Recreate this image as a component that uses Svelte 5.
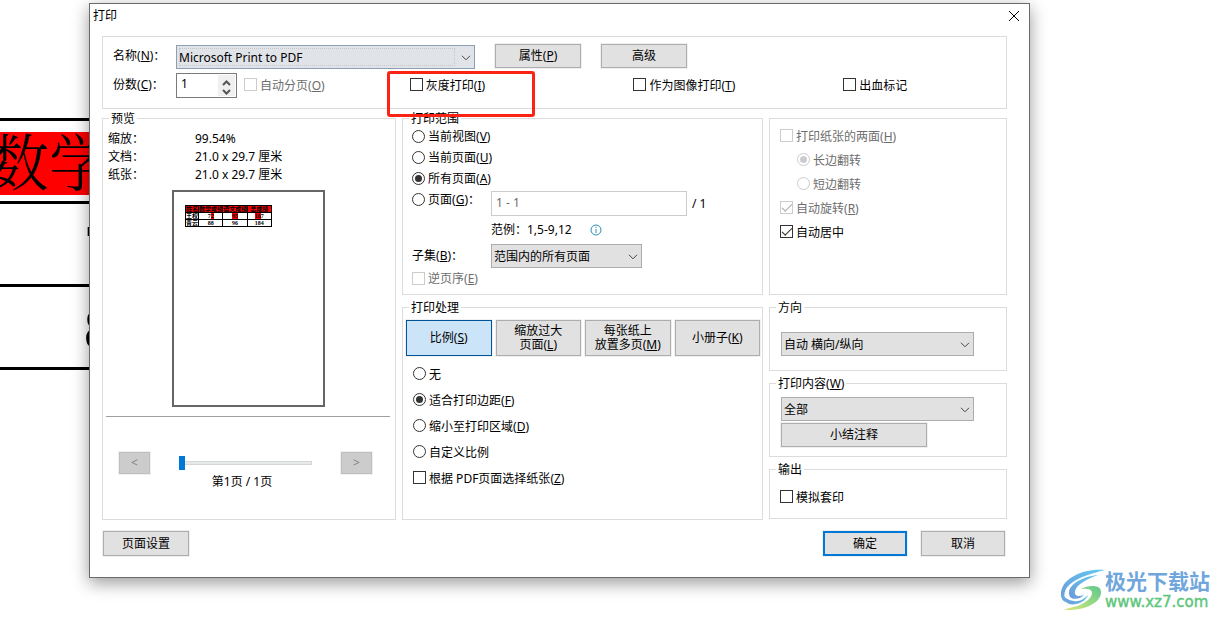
<script>
	let printer = $state('Microsoft Print to PDF');
	let copies = $state(1);
	let range = $state('all');
	let scaling = $state('fit');
	let mode = $state('S');
	let page = $state(1);

	const modes = [
		{ lines: ['比例'], key: 'S' },
		{ lines: ['缩放过大', '页面'], key: 'L' },
		{ lines: ['每张纸上', '放置多页'], key: 'M' },
		{ lines: ['小册子'], key: 'K' }
	];

	const ranges = [
		{ value: 'view', text: '当前视图', key: 'V' },
		{ value: 'current', text: '当前页面', key: 'U' },
		{ value: 'all', text: '所有页面', key: 'A' }
	];

	const scalings = [
		{ value: 'none', text: '无' },
		{ value: 'fit', text: '适合打印边距', key: 'F' },
		{ value: 'shrink', text: '缩小至打印区域', key: 'D' },
		{ value: 'custom', text: '自定义比例' }
	];
</script>

{#snippet caption(text, key)}<span>{text}{#if key}(<u>{key}</u>){/if}</span>{/snippet}

{#snippet chevron()}
	<svg class="chevron" viewBox="0 0 10 6" aria-hidden="true"><path d="M1 .8 5 4.8 9 .8" /></svg>
{/snippet}

<div class="desktop" lang="zh-CN">
	<!-- Document behind the dialog -->
	<div class="sheet" aria-hidden="true">
		<div class="row"><span class="head">数学</span></div>
		<div class="row"><span class="digit">7</span></div>
		<div class="row"><span class="digit">8</span></div>
	</div>

	<div class="dialog" role="dialog" aria-labelledby="title">
		<header>
			<span id="title">打印</span>
			<button class="close" aria-label="关闭">
				<svg viewBox="0 0 12 12"><path d="M1 1 11 11M11 1 1 11" /></svg>
			</button>
		</header>

		<section class="group printer">
			<div class="line">
				<label for="printer">{@render caption('名称', 'N')}：</label>
				<span class="select focus name">
					<select id="printer" bind:value={printer}>
						<option>Microsoft Print to PDF</option>
					</select>
					{@render chevron()}
				</span>
				<button class="btn wide">{@render caption('属性', 'P')}</button>
				<button class="btn wide">高级</button>
			</div>
			<div class="options">
				<label for="copies">{@render caption('份数', 'C')}：</label>
				<span class="spin">
					<input id="copies" type="number" min="1" bind:value={copies} />
					<span class="arrows">
						<button aria-label="增加" onclick={() => copies++}>
							<svg viewBox="0 0 9 6"><path d="M1 5 4.5 1.5 8 5" /></svg>
						</button>
						<button aria-label="减少" onclick={() => (copies = Math.max(1, copies - 1))}>
							<svg viewBox="0 0 9 6"><path d="M1 1 4.5 4.5 8 1" /></svg>
						</button>
					</span>
				</span>
				<label class="tick"><input type="checkbox" disabled />{@render caption('自动分页', 'O')}</label>
				<label class="tick marked">
					<input type="checkbox" />{@render caption('灰度打印', 'I')}
				</label>
				<label class="tick"><input type="checkbox" />{@render caption('作为图像打印', 'T')}</label>
				<label class="tick"><input type="checkbox" />出血标记</label>
			</div>
		</section>

		<main>
			<fieldset class="group preview">
				<legend>预览</legend>
				<dl>
					<dt>缩放：</dt>
					<dd>99.54%</dd>
					<dt>文档：</dt>
					<dd>21.0 x 29.7 厘米</dd>
					<dt>纸张：</dt>
					<dd>21.0 x 29.7 厘米</dd>
				</dl>
				<div class="paper">
					<table>
						<tbody>
							<tr class="red"><th>姓名</th><th>数学成绩</th><th>语文成绩</th><th>总成绩</th></tr>
							<tr><td>王权</td><td>7<b>2</b></td><td><b>95</b></td><td><b>16</b>7</td></tr>
							<tr><td>青云</td><td>88</td><td>96</td><td>184</td></tr>
						</tbody>
					</table>
				</div>
				<hr />
				<div class="pager">
					<button class="btn" disabled>&lt;</button>
					<input type="range" min="1" max="2" aria-label="页码" bind:value={page} />
					<button class="btn" disabled>&gt;</button>
				</div>
				<p>第1页 / 1页</p>
			</fieldset>

			<fieldset class="group range">
				<legend>打印范围</legend>
				{#each ranges as r}
					<label class="tick">
						<input type="radio" name="range" value={r.value} bind:group={range} />{@render caption(r.text, r.key)}
					</label>
				{/each}
				<div class="fields">
					<label class="tick">
						<input type="radio" name="range" value="pages" bind:group={range} />
						<span>{@render caption('页面', 'G')}：</span>
					</label>
					<div class="pages">
						<input type="text" value="1 - 1" aria-label="页面范围" disabled />
						<span>/ 1</span>
					</div>
					<div class="example">
						<span>范例：1,5-9,12</span>
						<svg viewBox="0 0 12 12" aria-hidden="true">
							<circle cx="6" cy="6" r="5" />
							<path d="M6 5v4M6 2.7v1.2" />
						</svg>
					</div>
					<label for="subset">{@render caption('子集', 'B')}：</label>
					<span class="select subset">
						<select id="subset"><option>范围内的所有页面</option></select>
						{@render chevron()}
					</span>
				</div>
				<label class="tick"><input type="checkbox" disabled />{@render caption('逆页序', 'E')}</label>
			</fieldset>

			<section class="group sides">
				<label class="tick"><input type="checkbox" disabled />{@render caption('打印纸张的两面', 'H')}</label>
				<label class="tick sub"><input type="radio" name="flip" checked disabled />长边翻转</label>
				<label class="tick sub"><input type="radio" name="flip" disabled />短边翻转</label>
				<label class="tick"><input type="checkbox" checked disabled />{@render caption('自动旋转', 'R')}</label>
				<label class="tick"><input type="checkbox" checked />自动居中</label>
			</section>

			<fieldset class="group handling">
				<legend>打印处理</legend>
				<div class="modes">
					{#each modes as m}
						<button class="btn" class:active={mode === m.key} onclick={() => (mode = m.key)}>
							{#each m.lines as text, i}
								{@render caption(text, i === m.lines.length - 1 ? m.key : '')}
							{/each}
						</button>
					{/each}
				</div>
				{#each scalings as s}
					<label class="tick">
						<input type="radio" name="scaling" value={s.value} bind:group={scaling} />{@render caption(s.text, s.key)}
					</label>
				{/each}
				<label class="tick"><input type="checkbox" />{@render caption('根据 PDF页面选择纸张', 'Z')}</label>
			</fieldset>

			<div class="stack">
				<fieldset class="group direction">
					<legend>方向</legend>
					<span class="select">
						<select aria-label="方向"><option>自动 横向/纵向</option></select>
						{@render chevron()}
					</span>
				</fieldset>
				<fieldset class="group content">
					<legend>{@render caption('打印内容', 'W')}</legend>
					<span class="select">
						<select aria-label="打印内容"><option>全部</option></select>
						{@render chevron()}
					</span>
					<button class="btn">小结注释</button>
				</fieldset>
				<fieldset class="group output">
					<legend>输出</legend>
					<label class="tick"><input type="checkbox" />模拟套印</label>
				</fieldset>
			</div>
		</main>

		<footer>
			<button class="btn wide">页面设置</button>
			<button class="btn ok">确定</button>
			<button class="btn">取消</button>
		</footer>
	</div>

	<div class="watermark">
		<svg viewBox="0 0 44 42" aria-hidden="true">
			<defs>
				<linearGradient id="blue" x1="0" y1="1" x2="1" y2="0">
					<stop offset="0" stop-color="#6c9ad8" />
					<stop offset="1" stop-color="#62c8f2" />
				</linearGradient>
				<linearGradient id="green" x1="0" y1="1" x2="1" y2="0">
					<stop offset="0" stop-color="#d8e87c" />
					<stop offset="1" stop-color="#5cc98c" />
				</linearGradient>
			</defs>
			<path fill="url(#blue)" d="M44 1C27-1 8 6 2 17c-4 8-2 13 2 16-1-5-1-9 1-13C11 10 28 5 44 1Z" />
			<path fill="url(#blue)" d="M37 6C24 7 9 14 8 23c-1 8 9 9 15 3-6 2-10 1-9-4 2-7 12-12 23-16Z" />
			<path fill="url(#blue)" d="M1 24c0 8 6 13 14 11 6-1 11-5 12-9-4 4-9 7-14 6C6 31 3 28 1 24Z" />
			<path fill="url(#green)" d="M20 20c7-4 21-5 20 4-1 10-16 18-37 17 6-3 11-3 16-5 8-4 12-8 12-12 0-4-5-5-11-4Z" />
		</svg>
		<div>
			<strong>极光下载站</strong>
			<span>www.xz7.com</span>
		</div>
	</div>
</div>

<style>
	:global(body) {
		background: #fff;
	}

	.desktop {
		position: relative;
		min-height: 100vh;
		box-sizing: border-box;
		padding: 3px 190px 0 89px;
		overflow: hidden;
		font: 12px/16px 'Noto Sans', 'Noto Sans CJK SC', sans-serif;
		color: #000;
	}

	.desktop *,
	.desktop *::after {
		box-sizing: border-box;
	}

	button,
	input,
	select {
		font: inherit;
		color: inherit;
		margin: 0;
		padding: 0;
	}

	svg {
		fill: none;
		stroke: #444;
	}

	/* document */
	.sheet {
		position: absolute;
		top: 118px;
		left: 0;
		width: 160px;
		border-bottom: 3px solid #000;
	}

	.row {
		height: 83px;
		border-top: 3px solid #000;
		padding-top: 11px;
		font: 56px/63px 'Liberation Serif', 'Noto Serif CJK SC', 'Noto Sans CJK SC', serif;
		white-space: nowrap;
	}

	.head {
		display: block;
		height: 63px;
		background: #f00;
		font-size: 62px;
		line-height: 67px;
		text-indent: -13px;
		font-weight: 300;
	}

	.digit {
		padding-left: 84px;
	}

	/* dialog */
	.dialog {
		position: relative;
		background: #fff;
		border: 1px solid #6a6a6a;
		padding: 0 22px 21px 12px;
		box-shadow: 0 5px 16px rgba(0, 0, 0, 0.4);
	}

	header {
		display: flex;
		justify-content: space-between;
		align-items: center;
		height: 24px;
		margin: 0 -19px 8px -9px;
	}

	.close {
		width: 24px;
		height: 24px;
		border: 0;
		background: none;
	}

	.close svg {
		display: block;
		width: 12px;
		margin: auto;
		stroke: #000;
	}

	.group {
		position: relative;
		min-width: 0;
		margin: 0;
		border: 1px solid #dcdcdc;
	}

	legend {
		position: absolute;
		top: -8px;
		left: 6px;
		padding: 0 2px;
		background: #fff;
	}

	.btn {
		height: 24px;
		border: 1px solid #adadad;
		background: #e1e1e1;
		box-shadow: 0 0 0 1px #f0f0f0;
	}

	.wide {
		width: 86px;
	}

	.btn:disabled {
		background: #ccc;
		border-color: #bfbfbf;
		color: #838383;
	}

	.select {
		position: relative;
		display: block;
	}

	.select select {
		display: block;
		appearance: none;
		width: 100%;
		height: 24px;
		padding: 1px 2px 0;
		border: 1px solid #adadad;
		border-radius: 0;
		background: #e1e1e1;
	}

	.focus select {
		border-color: #8ba0b2;
		background: #e0e3e8;
	}

	.focus::after {
		content: '';
		position: absolute;
		inset: 3px 20px 3px 3px;
		border: 1px dotted #c4c6ca;
		pointer-events: none;
	}

	.chevron {
		position: absolute;
		top: 10px;
		right: 4px;
		width: 10px;
		height: 6px;
		pointer-events: none;
	}

	.tick {
		display: flex;
		align-items: center;
		gap: 3px;
		padding-top: 1px;
		white-space: nowrap;
	}

	.tick:has(input:disabled) {
		color: #6d6d6d;
	}

	.tick input {
		appearance: none;
		flex: none;
		display: grid;
		place-items: center;
		width: 13px;
		height: 13px;
		margin-bottom: 2px;
		border: 1px solid #333;
		background: #fff;
	}

	.tick input:disabled {
		border-color: #ccc;
	}

	.tick input[type='radio'] {
		border-radius: 50%;
	}

	.tick input[type='radio']:checked::after {
		content: '';
		width: 7px;
		height: 7px;
		border-radius: 50%;
		background: #333;
	}

	.tick input[type='radio']:checked:disabled::after {
		background: #ccc;
	}

	.tick input[type='checkbox']:checked::after {
		content: '';
		width: 10px;
		height: 5px;
		border: solid #333;
		border-width: 0 0 1px 1px;
		transform: translateY(-1px) rotate(-45deg);
	}

	.tick input[type='checkbox']:checked:disabled::after {
		border-color: #aaa;
	}

	/* printer */
	.printer {
		padding: 8px 0 10px 10px;
	}

	.line {
		display: flex;
		gap: 20px;
		margin-bottom: 4px;
	}

	.line label {
		width: 43px;
		line-height: 22px;
		white-space: nowrap;
	}

	.line .btn {
		margin-top: -1px;
	}

	.name {
		flex: 0 1 299px;
	}

	.options {
		display: grid;
		grid-template-columns: 63px 68px 166fr 224fr 210fr 163fr;
	}

	.options > label {
		height: 23px;
		line-height: 23px;
	}

	.marked {
		position: relative;
		z-index: 1;
	}

	.marked::after {
		content: '';
		position: absolute;
		top: -2px;
		left: -23px;
		width: 148px;
		height: 46px;
		border: 3px solid #fb2314;
		border-radius: 3px;
	}

	.spin {
		display: flex;
		width: 61px;
		height: 25px;
		border: 1px solid #7a7a7a;
		padding: 1px;
	}

	.spin input {
		flex: 1;
		min-width: 0;
		border: 0;
		padding: 0 3px 3px;
		appearance: textfield;
	}

	.spin input::-webkit-inner-spin-button {
		appearance: none;
	}

	.arrows {
		display: grid;
		width: 17px;
		padding-top: 3px;
		background: #f0f0f0;
	}

	.arrows button {
		display: grid;
		place-items: center;
		border: 0;
		background: none;
	}

	.arrows svg {
		width: 9px;
		height: 6px;
		stroke: #555;
		stroke-width: 2;
	}

	/* panels */
	main {
		display: grid;
		grid-template-columns: 294fr 361fr 238fr;
		gap: 12px 6px;
		margin-top: 9px;
	}

	.preview {
		grid-row: span 2;
		padding: 11px 5px 0 3px;
	}

	dl {
		display: grid;
		grid-template-columns: 87px 1fr;
		margin: 0 0 6px 2px;
		line-height: 18px;
	}

	dd {
		margin: 0;
	}

	.paper {
		width: 153px;
		height: 217px;
		margin: 0 auto 9px 66px;
		border: 2px solid #666;
		padding: 13px 11px;
	}

	table {
		width: 87px;
		border-collapse: collapse;
		table-layout: fixed;
		font: bold 6px/6px 'Liberation Serif', 'Noto Sans CJK SC', serif;
	}

	th,
	td {
		padding: 0;
		height: 7px;
		border: 1px solid #000;
		overflow: hidden;
		text-align: center;
		white-space: nowrap;
	}

	th:first-child {
		width: 13px;
	}

	.red,
	td b {
		background: #f00;
	}

	hr {
		margin: 0;
		border: 0;
		border-top: 1px solid #a0a0a0;
	}

	.pager {
		display: flex;
		justify-content: space-between;
		align-items: center;
		margin: 35px 18px 0 13px;
	}

	.pager .btn {
		width: 31px;
		height: 22px;
	}

	.pager input {
		appearance: none;
		width: 133px;
		height: 14px;
		background: none;
	}

	.pager input::-webkit-slider-runnable-track {
		height: 4px;
		border: 1px solid #d6d6d6;
		background: #e7eaea;
	}

	.pager input::-webkit-slider-thumb {
		appearance: none;
		width: 6px;
		height: 14px;
		margin: -6px 0 0 -1px;
		background: #0078d7;
	}

	.preview p {
		margin: 0;
		padding-right: 12px;
		text-align: center;
	}

	.range {
		padding: 7px 9px 5px;
	}

	.range .tick {
		height: 21px;
	}

	.fields {
		display: grid;
		grid-template-columns: 79px 1fr;
	}

	.fields > label {
		line-height: 24px;
		white-space: nowrap;
	}

	.pages {
		display: flex;
		gap: 5px;
		align-items: center;
		padding-top: 2px;
	}

	.pages input {
		flex: 0 1 196px;
		min-width: 0;
		height: 25px;
		padding: 0 4px 3px;
		border: 1px solid #ccc;
		background: #fff;
		color: #6d6d6d;
	}

	.example {
		grid-column: 2;
		display: flex;
		align-items: center;
		gap: 18px;
		line-height: 28px;
	}

	.example svg {
		width: 12px;
		stroke: #2a8cb4;
	}

	.subset {
		width: 151px;
	}

	.sides {
		padding: 5px 0 0 10px;
	}

	.sides .tick {
		height: 24px;
	}

	.sides .sub {
		margin-left: 17px;
	}

	.handling {
		padding: 12px 2px 28px 3px;
	}

	.modes {
		display: grid;
		grid-template-columns: repeat(4, 1fr);
		gap: 4px;
		margin-bottom: 5px;
	}

	.modes .btn {
		height: 36px;
		line-height: 14px;
	}

	.modes .btn span {
		display: block;
	}

	.modes .active {
		border-color: #005499;
		background: #cce4f7;
	}

	.handling .tick {
		height: 26px;
		margin-left: 7px;
	}

	.stack {
		display: flex;
		flex-direction: column;
		gap: 12px;
	}

	.stack .group {
		padding: 0 32px 0 11px;
	}

	.stack .direction {
		padding-top: 24px;
		padding-bottom: 14px;
	}

	.stack .content {
		padding-top: 13px;
		padding-bottom: 9px;
	}

	.content .btn {
		display: block;
		width: 146px;
		margin-top: 2px;
	}

	.stack .output {
		padding: 15px 10px 9px;
	}

	.output .tick {
		height: 24px;
	}

	footer {
		display: flex;
		gap: 14px;
		margin: 11px 2px 0 1px;
	}

	footer .btn {
		width: 84px;
		height: 25px;
	}

	footer .wide {
		width: 86px;
		margin-right: auto;
	}

	.ok {
		border: 2px solid #0078d7;
	}

	/* site mark */
	.watermark {
		position: absolute;
		right: 10px;
		bottom: 8px;
		display: flex;
	}

	.watermark svg {
		width: 44px;
		height: 42px;
		stroke: none;
	}

	.watermark strong {
		display: block;
		font-size: 21px;
		line-height: 24px;
		color: #6fa6dc;
	}

	.watermark span {
		display: block;
		font: 15px/18px 'DejaVu Sans', Verdana, sans-serif;
		color: #5cc67a;
		-webkit-text-stroke: 0.4px #5cc67a;
	}
</style>
